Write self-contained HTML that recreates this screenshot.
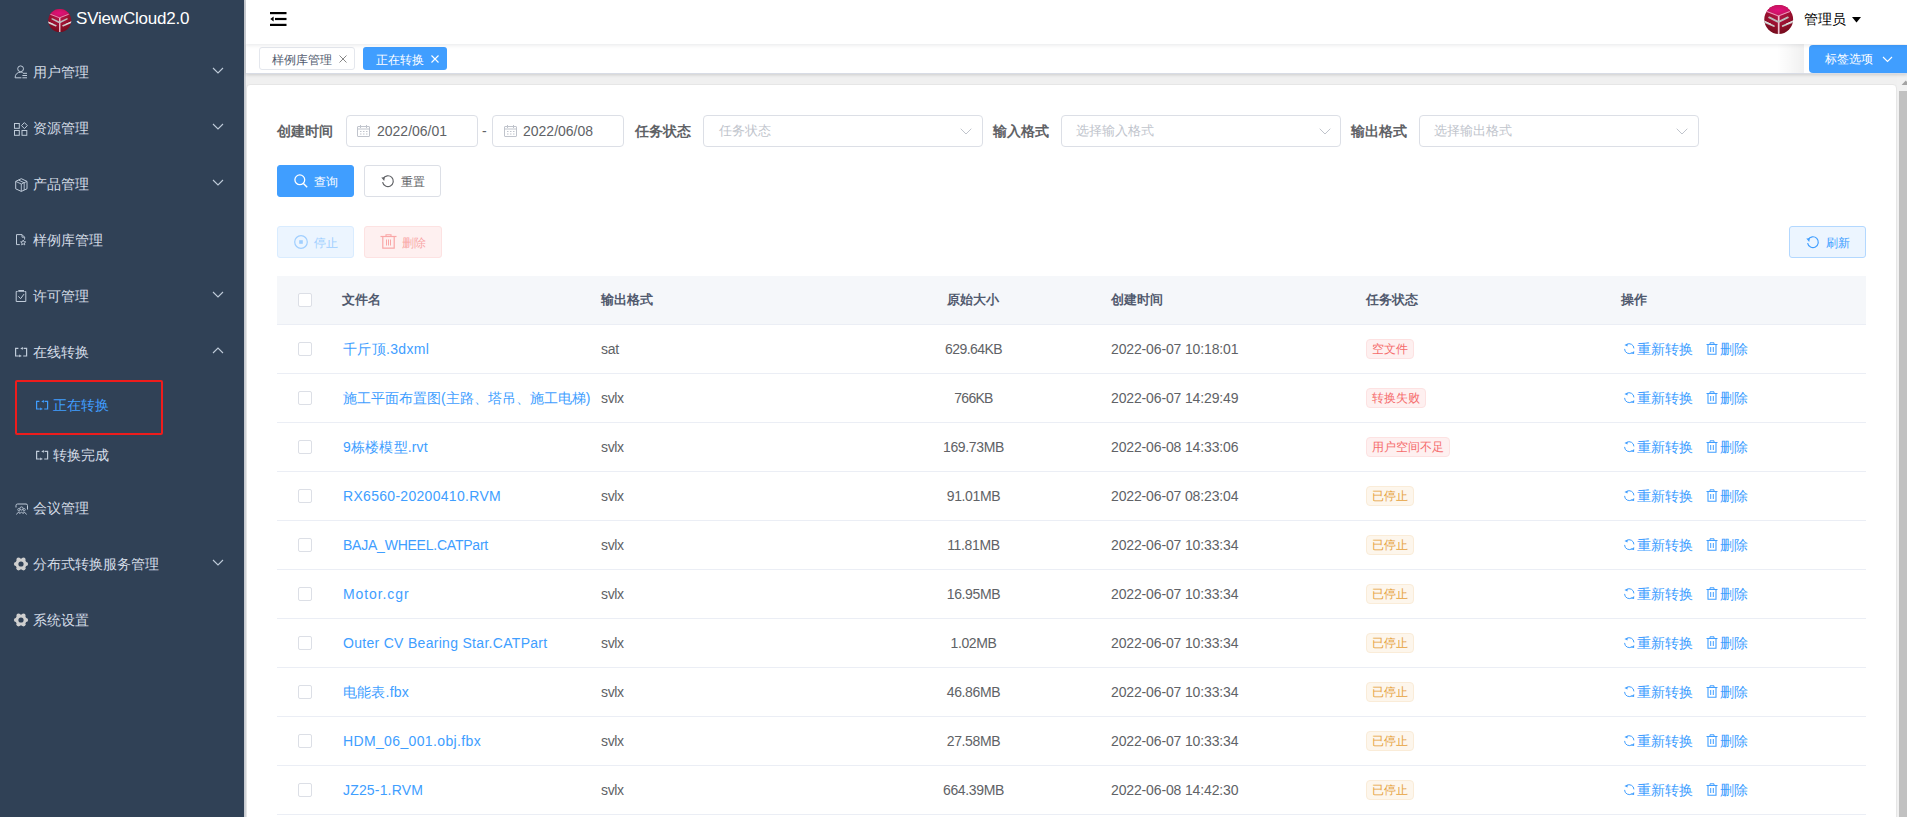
<!DOCTYPE html>
<html><head><meta charset="utf-8">
<style>
*{box-sizing:border-box}
html,body{margin:0;padding:0;width:1907px;height:817px;overflow:hidden;background:#fff;font-family:"Liberation Sans",sans-serif;font-size:14px;color:#606266}
.abs{position:absolute}
#side{position:absolute;left:0;top:0;width:244px;height:817px;background:#304156}
#sideshadow{position:absolute;left:244px;top:0;width:2px;height:817px;background:linear-gradient(to right,#c4c7cd,#d3d6da)}
.logo{position:absolute;left:0;top:0;width:244px;height:45px}
.logotext{position:absolute;left:76px;top:9px;font-size:17px;letter-spacing:-0.2px;color:#fff;white-space:nowrap}
.mi{position:absolute;left:0;width:244px;height:56px;color:#d4dce6;font-size:14px}
.mi .t{position:absolute;left:33px;top:-1px;line-height:56px;white-space:nowrap}
.mi svg.ic{position:absolute;left:14px;top:22px}
.mi .arr{position:absolute;left:212px;top:22px}
.smi{position:absolute;left:0;width:244px;height:50px;color:#d4dce6}
.smi .t{position:absolute;left:53px;top:-1px;line-height:50px;white-space:nowrap}
.smi svg.ic{position:absolute;left:35px;top:19px}
#nav{position:absolute;left:246px;top:0;width:1661px;height:44px;background:#fff;box-shadow:0 1px 4px rgba(0,21,41,.1);z-index:3}
#tags{position:absolute;left:246px;top:44px;width:1661px;height:30px;background:#fff;box-shadow:0 1px 3px 0 rgba(0,0,0,.15);border-bottom:1px solid #d8dce5;z-index:2}
#main{position:absolute;left:246px;top:74px;width:1661px;height:743px;background:#f0f0f0}
#card{position:absolute;left:0;top:10px;width:1651px;height:800px;background:#fff;border:1px solid #e6e6e6;border-radius:4px}
.lbl{position:absolute;font-weight:bold;color:#606266;line-height:32px;white-space:nowrap}
.inp{position:absolute;height:32px;border:1px solid #dcdfe6;border-radius:4px;background:#fff}
.inp .v{position:absolute;left:30px;top:0;line-height:30px;color:#606266;white-space:nowrap}
.inp .ph{position:absolute;left:15px;top:0;line-height:30px;color:#c0c4cc;font-size:13px;white-space:nowrap}
.btn{position:absolute;height:32px;border-radius:3px;font-size:12px;white-space:nowrap}
.th{position:absolute;top:276px;height:48px;line-height:48px;font-size:13px;font-weight:bold;color:#515a6e;white-space:nowrap}
.row{position:absolute;left:277px;width:1589px;height:49px;border-bottom:1px solid #ebeef5;background:#fff}
.cb{position:absolute;width:14px;height:14px;border:1px solid #dcdfe6;border-radius:2px;background:#fff}
.c{position:absolute;top:0;line-height:48px;white-space:nowrap}
.link{color:#409eff}
.tag{position:absolute;top:14px;height:20px;line-height:18px;font-size:12px;padding:0 5px;border-radius:4px;border:1px solid;white-space:nowrap}
.red{background:#fef0f0;border-color:#fde2e2;color:#f56c6c}
.org{background:#fdf6ec;border-color:#faecd8;color:#e6a23c}
</style></head>
<body>
<!-- SIDEBAR -->
<div id="side">
  <div class="logo">
    <svg class="abs" style="left:48px;top:9px" width="24" height="24" viewBox="0 0 30 30"><defs><radialGradient id="sg" cx="0.5" cy="0.3" r="0.75"><stop offset="0" stop-color="#b8144e"/><stop offset="0.55" stop-color="#98102e"/><stop offset="1" stop-color="#6e0a1a"/></radialGradient>
<radialGradient id="sgt" cx="0.5" cy="0.55" r="0.6"><stop offset="0" stop-color="#e0107a"/><stop offset="1" stop-color="#b81450"/></radialGradient>
<clipPath id="scl"><circle cx="14.7" cy="14.5" r="14.4"/></clipPath></defs>
<circle cx="14.7" cy="14.5" r="14.4" fill="url(#sg)"/>
<g clip-path="url(#scl)"><path d="M-2 5.5 L14.4 11 L31 5.5 L31 -2 L-2 -2 Z" fill="url(#sgt)"/>
<path d="M2.9 6.6 L14.4 11 L25.8 6.6" stroke="#eb9ab8" stroke-width="1.1" fill="none"/>
<path d="M14.7 11 V30" stroke="#efc4d2" stroke-width="1.7"/>
<path d="M5.2 12.4 L13.6 16.6 M15.2 16.6 L23.8 12.4" stroke="#bdbdbd" stroke-width="1.9" stroke-linecap="round"/>
<path d="M-1 16.2 L9.8 21 M18.8 21 L30 16.2" stroke="#c8c8c8" stroke-width="1.9" stroke-linecap="round"/>
<path d="M-1 15.6 L7 19.2 M22 19.2 L30 15.6" stroke="#f2f2f2" stroke-width="0.8"/></g></svg>
    <div class="logotext">SViewCloud2.0</div>
  </div>
  <div class="mi" style="top:45px"><svg class="ic" style="left:14px;top:20px" width="14" height="14" viewBox="0 0 14 14"><circle cx="6.6" cy="3.8" r="2.9" stroke="#bfcbd9" fill="none"/><path d="M1.1 12.8 C1.1 9.2 3.4 7.2 6.6 7.2 C7.4 7.2 8.1 7.4 8.7 7.7" stroke="#bfcbd9" fill="none"/><path d="M1.1 12.8 H7.4 M9 8.3 H13 M8.4 10.5 H13 M8.4 12.8 H13" stroke="#bfcbd9" fill="none"/></svg><span class="t">用户管理</span><svg class="arr" width="12" height="7" viewBox="0 0 12 7"><path d="M1 1 L6 6 L11 1" stroke="#bfcbd9" stroke-width="1.1" fill="none"/></svg></div>
  <div class="mi" style="top:101px"><svg class="ic" style="left:14px;top:21px" width="14" height="14" viewBox="0 0 14 14"><rect x="0.5" y="1.5" width="4.8" height="4.8" stroke="#bfcbd9" fill="none"/><rect x="0.5" y="8.5" width="4.8" height="4.8" stroke="#bfcbd9" fill="none"/><rect x="8" y="8.5" width="4.8" height="4.8" stroke="#bfcbd9" fill="none"/><path d="M10.4 0.6 L13.3 3.6 L10.4 6.6 L7.5 3.6 Z" stroke="#bfcbd9" fill="none"/></svg><span class="t">资源管理</span><svg class="arr" width="12" height="7" viewBox="0 0 12 7"><path d="M1 1 L6 6 L11 1" stroke="#bfcbd9" stroke-width="1.1" fill="none"/></svg></div>
  <div class="mi" style="top:157px"><svg class="ic" style="left:15px;top:21px" width="13" height="14" viewBox="0 0 13 14"><path d="M0.7 3.4 L6.3 0.7 L12 3.4 L12 10.8 L6.3 13.4 L0.7 10.8 Z" stroke="#bfcbd9" fill="none"/><path d="M0.7 3.4 L6.3 6 L12 3.4 M6.3 6 V13.4 M3.5 2 L9.2 4.8 V12" stroke="#bfcbd9" stroke-width="0.9" fill="none"/></svg><span class="t">产品管理</span><svg class="arr" width="12" height="7" viewBox="0 0 12 7"><path d="M1 1 L6 6 L11 1" stroke="#bfcbd9" stroke-width="1.1" fill="none"/></svg></div>
  <div class="mi" style="top:213px"><svg class="ic" style="left:15px;top:21px" width="12" height="13" viewBox="0 0 12 13"><path d="M7 0.6 H1.5 V10.6 H4.8" stroke="#bfcbd9" fill="none"/><path d="M7 0.6 L9.6 3.2 V5.6 M7 0.6 V3.2 H9.6" stroke="#bfcbd9" stroke-width="0.9" fill="none"/><path d="M8.20 6.00 L8.91 7.73 L10.77 7.87 L9.34 9.07 L9.79 10.88 L8.20 9.90 L6.61 10.88 L7.06 9.07 L5.63 7.87 L7.49 7.73 Z" stroke="#bfcbd9" stroke-width="0.9" stroke-linejoin="round" fill="none"/></svg><span class="t">样例库管理</span></div>
  <div class="mi" style="top:269px"><svg class="ic" style="left:15px;top:21px" width="12" height="13" viewBox="0 0 12 13"><path d="M2.6 1.5 H1.2 V11.5 H10.8 V1.5 H9.4" stroke="#bfcbd9" fill="none"/><rect x="3.3" y="0" width="5.7" height="1.8" fill="#bfcbd9"/><path d="M3.3 6.3 L5.6 8.7 L9 4.1" stroke="#bfcbd9" fill="none"/></svg><span class="t">许可管理</span><svg class="arr" width="12" height="7" viewBox="0 0 12 7"><path d="M1 1 L6 6 L11 1" stroke="#bfcbd9" stroke-width="1.1" fill="none"/></svg></div>
  <div class="mi" style="top:325px"><svg class="ic" style="left:14px;top:22px" width="14" height="12" viewBox="0 0 14 12"><path d="M4.4 1.4 H1.6 V9.0 H4.9 M9.6 1.4 H12.6 V9.0 H9.2" stroke="#bfcbd9" stroke-width="1.2" fill="none"/><path d="M6.2 1.4 L8.9 0 L8.9 2.8 Z M7.9 8.9 L5.1 7.5 L5.1 10.3 Z" fill="#bfcbd9"/></svg><span class="t">在线转换</span><svg class="arr" width="12" height="7" viewBox="0 0 12 7"><path d="M1 6 L6 1 L11 6" stroke="#bfcbd9" stroke-width="1.1" fill="none"/></svg></div>
  <div class="mi" style="top:481px"><svg class="ic" style="left:14px;top:22px" width="15" height="13" viewBox="0 0 15 13"><path d="M2 4.5 V2.5 Q2 1 3.5 1 H12 Q13.5 1 13.5 2.5 V6.5" stroke="#bfcbd9" fill="none"/><circle cx="7.5" cy="5.5" r="1.6" stroke="#bfcbd9" stroke-width="0.9" fill="none"/><circle cx="4.8" cy="6.6" r="1.1" stroke="#bfcbd9" stroke-width="0.8" fill="none"/><circle cx="10.2" cy="6.6" r="1.1" stroke="#bfcbd9" stroke-width="0.8" fill="none"/><path d="M2.5 11.5 Q3.8 8.5 6 9 M5.5 11 Q7.5 7.5 9.5 11 M9 9 Q11 8.5 12.5 11.5" stroke="#bfcbd9" stroke-width="0.9" fill="none"/></svg><span class="t">会议管理</span></div>
  <div class="mi" style="top:537px"><svg class="ic" style="left:13px;top:19px" width="16" height="16" viewBox="0 0 16 16"><g fill="#cfcfcf"><circle cx="8" cy="8" r="5.6"/><circle cx="13.00" cy="8.00" r="2.1"/><circle cx="10.50" cy="12.33" r="2.1"/><circle cx="5.50" cy="12.33" r="2.1"/><circle cx="3.00" cy="8.00" r="2.1"/><circle cx="5.50" cy="3.67" r="2.1"/><circle cx="10.50" cy="3.67" r="2.1"/></g><circle cx="8" cy="8" r="2.6" fill="#304156"/></svg><span class="t">分布式转换服务管理</span><svg class="arr" width="12" height="7" viewBox="0 0 12 7"><path d="M1 1 L6 6 L11 1" stroke="#bfcbd9" stroke-width="1.1" fill="none"/></svg></div>
  <div class="mi" style="top:593px"><svg class="ic" style="left:13px;top:19px" width="16" height="16" viewBox="0 0 16 16"><g fill="#cfcfcf"><circle cx="8" cy="8" r="5.6"/><circle cx="13.00" cy="8.00" r="2.1"/><circle cx="10.50" cy="12.33" r="2.1"/><circle cx="5.50" cy="12.33" r="2.1"/><circle cx="3.00" cy="8.00" r="2.1"/><circle cx="5.50" cy="3.67" r="2.1"/><circle cx="10.50" cy="3.67" r="2.1"/></g><circle cx="8" cy="8" r="2.6" fill="#304156"/></svg><span class="t">系统设置</span></div>
  <div class="smi" style="top:381px;color:#409eff"><svg class="ic" width="14" height="12" viewBox="0 0 14 12"><path d="M4.4 1.4 H1.6 V9.0 H4.9 M9.6 1.4 H12.6 V9.0 H9.2" stroke="#409eff" stroke-width="1.2" fill="none"/><path d="M6.2 1.4 L8.9 0 L8.9 2.8 Z M7.9 8.9 L5.1 7.5 L5.1 10.3 Z" fill="#409eff"/></svg><span class="t">正在转换</span></div>
  <div class="smi" style="top:431px"><svg class="ic" width="14" height="12" viewBox="0 0 14 12"><path d="M4.4 1.4 H1.6 V9.0 H4.9 M9.6 1.4 H12.6 V9.0 H9.2" stroke="#bfcbd9" stroke-width="1.2" fill="none"/><path d="M6.2 1.4 L8.9 0 L8.9 2.8 Z M7.9 8.9 L5.1 7.5 L5.1 10.3 Z" fill="#bfcbd9"/></svg><span class="t">转换完成</span></div>
  <div class="abs" style="left:15px;top:380px;width:148px;height:55px;border:2px solid #ee1c1c;border-radius:2px"></div>
</div>
<div id="sideshadow"></div>
<!-- NAVBAR -->
<div id="nav">
  <svg class="abs" style="left:24px;top:12px" width="17" height="14" viewBox="0 0 17 14"><rect x="0" y="0" width="16.5" height="2.2" fill="#000"/><rect x="5" y="5.9" width="11.5" height="2.2" fill="#000"/><rect x="0" y="11.8" width="16.5" height="2.2" fill="#000"/><path d="M0.3 7 L3.6 4.6 V9.4 Z" fill="#000"/></svg>
  <svg class="abs" style="left:1518px;top:4.7px" width="30" height="30" viewBox="0 0 30 30"><defs><radialGradient id="ag" cx="0.5" cy="0.3" r="0.75"><stop offset="0" stop-color="#b8144e"/><stop offset="0.55" stop-color="#98102e"/><stop offset="1" stop-color="#6e0a1a"/></radialGradient>
<radialGradient id="agt" cx="0.5" cy="0.55" r="0.6"><stop offset="0" stop-color="#e0107a"/><stop offset="1" stop-color="#b81450"/></radialGradient>
<clipPath id="acl"><circle cx="14.7" cy="14.5" r="14.4"/></clipPath></defs>
<circle cx="14.7" cy="14.5" r="14.4" fill="url(#ag)"/>
<g clip-path="url(#acl)"><path d="M-2 5.5 L14.4 11 L31 5.5 L31 -2 L-2 -2 Z" fill="url(#agt)"/>
<path d="M2.9 6.6 L14.4 11 L25.8 6.6" stroke="#eb9ab8" stroke-width="1.1" fill="none"/>
<path d="M14.7 11 V30" stroke="#efc4d2" stroke-width="1.7"/>
<path d="M5.2 12.4 L13.6 16.6 M15.2 16.6 L23.8 12.4" stroke="#bdbdbd" stroke-width="1.9" stroke-linecap="round"/>
<path d="M-1 16.2 L9.8 21 M18.8 21 L30 16.2" stroke="#c8c8c8" stroke-width="1.9" stroke-linecap="round"/>
<path d="M-1 15.6 L7 19.2 M22 19.2 L30 15.6" stroke="#f2f2f2" stroke-width="0.8"/></g></svg>
  <div class="abs" style="left:1558px;top:0;line-height:38px;color:#000;font-size:14px;white-space:nowrap">管理员</div>
  <svg class="abs" style="left:1606px;top:17px" width="9" height="6" viewBox="0 0 9 6"><path d="M0 0 H9 L4.5 5.5 Z" fill="#000"/></svg>
</div>
<div id="tags">
  <div class="abs" style="left:13px;top:3px;width:96px;height:23px;border:1px solid #e4e7ed;border-radius:3px;background:#fff"></div>
  <div class="abs" style="left:26px;top:5px;line-height:23px;font-size:12px;color:#515a6e;white-space:nowrap">样例库管理</div>
  <svg class="abs" style="left:93px;top:11px" width="8" height="8" viewBox="0 0 8 8"><path d="M0.5 0.5 L7.5 7.5 M7.5 0.5 L0.5 7.5" stroke="#888" stroke-width="1"/></svg>
  <div class="abs" style="left:117px;top:3px;width:84px;height:23px;border-radius:3px;background:#409eff"></div>
  <div class="abs" style="left:130px;top:5px;line-height:23px;font-size:12px;color:#fff;white-space:nowrap">正在转换</div>
  <svg class="abs" style="left:185px;top:11px" width="8" height="8" viewBox="0 0 8 8"><path d="M0.5 0.5 L7.5 7.5 M7.5 0.5 L0.5 7.5" stroke="#fff" stroke-width="1.1"/></svg>
  <div class="abs" style="left:1531px;top:0;width:27px;height:29px;background:linear-gradient(to right,rgba(255,255,255,0),rgba(0,0,0,.06))"></div>
  <div class="abs" style="left:1563px;top:1px;width:98px;height:28px;border-radius:4px 0 0 4px;background:#409eff"></div>
  <div class="abs" style="left:1579px;top:1px;line-height:28px;font-size:12px;color:#fff;white-space:nowrap">标签选项</div>
  <svg class="abs" style="left:1636px;top:12px" width="11" height="7" viewBox="0 0 11 7"><path d="M1 1 L5.5 5.5 L10 1" stroke="#fff" stroke-width="1.1" fill="none"/></svg>
</div>
<div id="main"><div id="card"></div></div>

<!-- FILTERS -->
<div class="lbl" style="left:277px;top:115px">创建时间</div>
<div class="inp" style="left:346px;top:115px;width:132px"></div>
<svg class="abs" style="left:357px;top:125px" width="13" height="12" viewBox="0 0 13 12"><rect x="0.5" y="1.5" width="12" height="10" rx="0.5" stroke="#c0c4cc" fill="none"/><path d="M0.5 4 H12.5" stroke="#c0c4cc"/><path d="M3.5 0 V3 M9.5 0 V3" stroke="#c0c4cc"/><path d="M3 6.5 H4.5 M6 6.5 H7.5 M9 6.5 H10.5 M3 9 H4.5 M6 9 H7.5 M9 9 H10.5" stroke="#c0c4cc" stroke-width="1"/></svg>
<div class="abs" style="left:377px;top:115px;line-height:32px;color:#606266;white-space:nowrap">2022/06/01</div>
<div class="abs" style="left:482px;top:115px;line-height:32px;color:#606266">-</div>
<div class="inp" style="left:492px;top:115px;width:132px"></div>
<svg class="abs" style="left:504px;top:125px" width="13" height="12" viewBox="0 0 13 12"><rect x="0.5" y="1.5" width="12" height="10" rx="0.5" stroke="#c0c4cc" fill="none"/><path d="M0.5 4 H12.5" stroke="#c0c4cc"/><path d="M3.5 0 V3 M9.5 0 V3" stroke="#c0c4cc"/><path d="M3 6.5 H4.5 M6 6.5 H7.5 M9 6.5 H10.5 M3 9 H4.5 M6 9 H7.5 M9 9 H10.5" stroke="#c0c4cc" stroke-width="1"/></svg>
<div class="abs" style="left:523px;top:115px;line-height:32px;color:#606266;white-space:nowrap">2022/06/08</div>
<div class="lbl" style="left:635px;top:115px">任务状态</div>
<div class="inp" style="left:703px;top:115px;width:280px"></div>
<div class="abs" style="left:719px;top:115px;line-height:32px;color:#c0c4cc;font-size:13px;white-space:nowrap">任务状态</div>
<svg class="abs" style="left:960px;top:128px" width="12" height="7" viewBox="0 0 12 7"><path d="M0.7 0.7 L6 6 L11.3 0.7" stroke="#c0c4cc" stroke-width="1" fill="none"/></svg>
<div class="lbl" style="left:993px;top:115px">输入格式</div>
<div class="inp" style="left:1061px;top:115px;width:280px"></div>
<div class="abs" style="left:1076px;top:115px;line-height:32px;color:#c0c4cc;font-size:13px;white-space:nowrap">选择输入格式</div>
<svg class="abs" style="left:1319px;top:128px" width="12" height="7" viewBox="0 0 12 7"><path d="M0.7 0.7 L6 6 L11.3 0.7" stroke="#c0c4cc" stroke-width="1" fill="none"/></svg>
<div class="lbl" style="left:1351px;top:115px">输出格式</div>
<div class="inp" style="left:1419px;top:115px;width:280px"></div>
<div class="abs" style="left:1434px;top:115px;line-height:32px;color:#c0c4cc;font-size:13px;white-space:nowrap">选择输出格式</div>
<svg class="abs" style="left:1676px;top:128px" width="12" height="7" viewBox="0 0 12 7"><path d="M0.7 0.7 L6 6 L11.3 0.7" stroke="#c0c4cc" stroke-width="1" fill="none"/></svg>
<!-- BUTTONS -->
<div class="btn" style="left:277px;top:165px;width:77px;background:#409eff;border:1px solid #409eff"></div>
<svg class="abs" style="left:294px;top:174px" width="14" height="14" viewBox="0 0 14 14"><circle cx="5.8" cy="5.8" r="4.9" stroke="#fff" stroke-width="1.3" fill="none"/><path d="M9.4 9.4 L13.2 13.2" stroke="#fff" stroke-width="1.4"/></svg>
<div class="abs" style="left:314px;top:166px;line-height:33px;font-size:12px;color:#fff;white-space:nowrap">查询</div>
<div class="btn" style="left:364px;top:165px;width:77px;background:#fff;border:1px solid #dcdfe6"></div>
<svg class="abs" style="left:381px;top:174px" width="14" height="14" viewBox="0 0 14 14"><path d="M2.2 4.5 A5.4 5.4 0 1 1 1.6 8.2" stroke="#606266" stroke-width="1.2" fill="none"/><path d="M0.3 3.6 L3.9 3.2 L3.2 6.9 Z" fill="#606266"/></svg>
<div class="abs" style="left:401px;top:166px;line-height:33px;font-size:12px;color:#606266;white-space:nowrap">重置</div>

<div class="btn" style="left:277px;top:226px;width:77px;background:#ecf5ff;border:1px solid #d9ecff"></div>
<svg class="abs" style="left:294px;top:235px" width="14" height="14" viewBox="0 0 14 14"><circle cx="7" cy="7" r="6.3" stroke="#a0cfff" stroke-width="1.2" fill="none"/><rect x="5.2" y="5.2" width="3.6" height="3.6" fill="#a0cfff"/></svg>
<div class="abs" style="left:314px;top:227px;line-height:33px;font-size:12px;color:#a0cfff;white-space:nowrap">停止</div>
<div class="btn" style="left:364px;top:226px;width:78px;background:#fef0f0;border:1px solid #fde2e2"></div>
<svg class="abs" style="left:380px;top:234px" width="17" height="15" viewBox="0 0 17 15"><path d="M0.5 2.5 H16.5" stroke="#f9a7a7" stroke-width="1.2"/><path d="M6 2.5 V0.8 H11 V2.5" stroke="#f9a7a7" stroke-width="1.1" fill="none"/><path d="M2.8 2.5 V14.2 H14.2 V2.5" stroke="#f9a7a7" stroke-width="1.2" fill="none"/><path d="M6.5 5.5 V11.5 M8.5 5.5 V11.5 M10.5 5.5 V11.5" stroke="#f9a7a7" stroke-width="1"/></svg>
<div class="abs" style="left:402px;top:227px;line-height:33px;font-size:12px;color:#f9a7a7;white-space:nowrap">删除</div>

<div class="btn" style="left:1789px;top:226px;width:77px;background:#ecf5ff;border:1px solid #b3d8ff"></div>
<svg class="abs" style="left:1806px;top:235px" width="14" height="14" viewBox="0 0 14 14"><path d="M2.2 4.5 A5.4 5.4 0 1 1 1.6 8.2" stroke="#409eff" stroke-width="1.2" fill="none"/><path d="M0.3 3.6 L3.9 3.2 L3.2 6.9 Z" fill="#409eff"/></svg>
<div class="abs" style="left:1826px;top:227px;line-height:33px;font-size:12px;color:#409eff;white-space:nowrap">刷新</div>
<!-- TABLE -->
<div class="abs" style="left:277px;top:276px;width:1589px;height:49px;background:#f5f7fa;border-bottom:1px solid #ebeef5"></div>
<div class="cb" style="left:298px;top:293px"></div>
<div class="th" style="left:342px">文件名</div>
<div class="th" style="left:601px">输出格式</div>
<div class="th" style="left:947px">原始大小</div>
<div class="th" style="left:1111px">创建时间</div>
<div class="th" style="left:1366px">任务状态</div>
<div class="th" style="left:1621px">操作</div>
<div class="row" style="top:325px"><div class="cb" style="left:21px;top:17px"></div><div class="c link" style="left:66px;letter-spacing:0.33px">千斤顶.3dxml</div><div class="c" style="left:324px;letter-spacing:-0.27px">sat</div><div class="c" style="left:569px;width:255px;text-align:center;letter-spacing:-0.59px;text-indent:0px">629.64KB</div><div class="c" style="left:834px;letter-spacing:-0.14px">2022-06-07 10:18:01</div><div class="tag red" style="left:1089px">空文件</div><svg class="abs" style="left:1347px;top:18px" width="12" height="12" viewBox="0 0 12 12"><path d="M2.6 1.5 A4.7 4.7 0 0 1 9.9 5.4 M0.6 5.9 A4.7 4.7 0 0 0 8.2 9.6" stroke="#409eff" stroke-width="1" fill="none"/><path d="M0.4 2.1 L3.6 0.5 L3.5 3.6 Z M10.2 7.9 L10.1 10.9 L6.9 10.6 Z" fill="#409eff"/></svg><div class="c link" style="left:1360px">重新转换</div><svg class="abs" style="left:1429px;top:17px" width="12" height="13" viewBox="0 0 12 13"><path d="M0.5 2.5 H11.5" stroke="#409eff" stroke-width="1"/><path d="M4 2.5 V0.8 H8 V2.5" stroke="#409eff" stroke-width="1" fill="none"/><path d="M2 2.5 V12.3 H10 V2.5" stroke="#409eff" stroke-width="1.1" fill="none"/><path d="M4.7 5 V10 M7.3 5 V10" stroke="#409eff" stroke-width="1"/></svg><div class="c link" style="left:1443px">删除</div></div>
<div class="row" style="top:374px"><div class="cb" style="left:21px;top:17px"></div><div class="c link" style="left:66px">施工平面布置图(主路、塔吊、施工电梯)</div><div class="c" style="left:324px;letter-spacing:-0.37px">svlx</div><div class="c" style="left:569px;width:255px;text-align:center;letter-spacing:-0.74px;text-indent:0px">766KB</div><div class="c" style="left:834px;letter-spacing:-0.14px">2022-06-07 14:29:49</div><div class="tag red" style="left:1089px">转换失败</div><svg class="abs" style="left:1347px;top:18px" width="12" height="12" viewBox="0 0 12 12"><path d="M2.6 1.5 A4.7 4.7 0 0 1 9.9 5.4 M0.6 5.9 A4.7 4.7 0 0 0 8.2 9.6" stroke="#409eff" stroke-width="1" fill="none"/><path d="M0.4 2.1 L3.6 0.5 L3.5 3.6 Z M10.2 7.9 L10.1 10.9 L6.9 10.6 Z" fill="#409eff"/></svg><div class="c link" style="left:1360px">重新转换</div><svg class="abs" style="left:1429px;top:17px" width="12" height="13" viewBox="0 0 12 13"><path d="M0.5 2.5 H11.5" stroke="#409eff" stroke-width="1"/><path d="M4 2.5 V0.8 H8 V2.5" stroke="#409eff" stroke-width="1" fill="none"/><path d="M2 2.5 V12.3 H10 V2.5" stroke="#409eff" stroke-width="1.1" fill="none"/><path d="M4.7 5 V10 M7.3 5 V10" stroke="#409eff" stroke-width="1"/></svg><div class="c link" style="left:1443px">删除</div></div>
<div class="row" style="top:423px"><div class="cb" style="left:21px;top:17px"></div><div class="c link" style="left:66px;letter-spacing:0.18px">9栋楼模型.rvt</div><div class="c" style="left:324px;letter-spacing:-0.37px">svlx</div><div class="c" style="left:569px;width:255px;text-align:center;letter-spacing:-0.35px;text-indent:0px">169.73MB</div><div class="c" style="left:834px;letter-spacing:-0.14px">2022-06-08 14:33:06</div><div class="tag red" style="left:1089px">用户空间不足</div><svg class="abs" style="left:1347px;top:18px" width="12" height="12" viewBox="0 0 12 12"><path d="M2.6 1.5 A4.7 4.7 0 0 1 9.9 5.4 M0.6 5.9 A4.7 4.7 0 0 0 8.2 9.6" stroke="#409eff" stroke-width="1" fill="none"/><path d="M0.4 2.1 L3.6 0.5 L3.5 3.6 Z M10.2 7.9 L10.1 10.9 L6.9 10.6 Z" fill="#409eff"/></svg><div class="c link" style="left:1360px">重新转换</div><svg class="abs" style="left:1429px;top:17px" width="12" height="13" viewBox="0 0 12 13"><path d="M0.5 2.5 H11.5" stroke="#409eff" stroke-width="1"/><path d="M4 2.5 V0.8 H8 V2.5" stroke="#409eff" stroke-width="1" fill="none"/><path d="M2 2.5 V12.3 H10 V2.5" stroke="#409eff" stroke-width="1.1" fill="none"/><path d="M4.7 5 V10 M7.3 5 V10" stroke="#409eff" stroke-width="1"/></svg><div class="c link" style="left:1443px">删除</div></div>
<div class="row" style="top:472px"><div class="cb" style="left:21px;top:17px"></div><div class="c link" style="left:66px;letter-spacing:0.3px">RX6560-20200410.RVM</div><div class="c" style="left:324px;letter-spacing:-0.37px">svlx</div><div class="c" style="left:569px;width:255px;text-align:center;letter-spacing:-0.35px;text-indent:0px">91.01MB</div><div class="c" style="left:834px;letter-spacing:-0.14px">2022-06-07 08:23:04</div><div class="tag org" style="left:1089px">已停止</div><svg class="abs" style="left:1347px;top:18px" width="12" height="12" viewBox="0 0 12 12"><path d="M2.6 1.5 A4.7 4.7 0 0 1 9.9 5.4 M0.6 5.9 A4.7 4.7 0 0 0 8.2 9.6" stroke="#409eff" stroke-width="1" fill="none"/><path d="M0.4 2.1 L3.6 0.5 L3.5 3.6 Z M10.2 7.9 L10.1 10.9 L6.9 10.6 Z" fill="#409eff"/></svg><div class="c link" style="left:1360px">重新转换</div><svg class="abs" style="left:1429px;top:17px" width="12" height="13" viewBox="0 0 12 13"><path d="M0.5 2.5 H11.5" stroke="#409eff" stroke-width="1"/><path d="M4 2.5 V0.8 H8 V2.5" stroke="#409eff" stroke-width="1" fill="none"/><path d="M2 2.5 V12.3 H10 V2.5" stroke="#409eff" stroke-width="1.1" fill="none"/><path d="M4.7 5 V10 M7.3 5 V10" stroke="#409eff" stroke-width="1"/></svg><div class="c link" style="left:1443px">删除</div></div>
<div class="row" style="top:521px"><div class="cb" style="left:21px;top:17px"></div><div class="c link" style="left:66px;letter-spacing:-0.23px">BAJA_WHEEL.CATPart</div><div class="c" style="left:324px;letter-spacing:-0.37px">svlx</div><div class="c" style="left:569px;width:255px;text-align:center;letter-spacing:-0.35px;text-indent:0px">11.81MB</div><div class="c" style="left:834px;letter-spacing:-0.14px">2022-06-07 10:33:34</div><div class="tag org" style="left:1089px">已停止</div><svg class="abs" style="left:1347px;top:18px" width="12" height="12" viewBox="0 0 12 12"><path d="M2.6 1.5 A4.7 4.7 0 0 1 9.9 5.4 M0.6 5.9 A4.7 4.7 0 0 0 8.2 9.6" stroke="#409eff" stroke-width="1" fill="none"/><path d="M0.4 2.1 L3.6 0.5 L3.5 3.6 Z M10.2 7.9 L10.1 10.9 L6.9 10.6 Z" fill="#409eff"/></svg><div class="c link" style="left:1360px">重新转换</div><svg class="abs" style="left:1429px;top:17px" width="12" height="13" viewBox="0 0 12 13"><path d="M0.5 2.5 H11.5" stroke="#409eff" stroke-width="1"/><path d="M4 2.5 V0.8 H8 V2.5" stroke="#409eff" stroke-width="1" fill="none"/><path d="M2 2.5 V12.3 H10 V2.5" stroke="#409eff" stroke-width="1.1" fill="none"/><path d="M4.7 5 V10 M7.3 5 V10" stroke="#409eff" stroke-width="1"/></svg><div class="c link" style="left:1443px">删除</div></div>
<div class="row" style="top:570px"><div class="cb" style="left:21px;top:17px"></div><div class="c link" style="left:66px;letter-spacing:0.9px">Motor.cgr</div><div class="c" style="left:324px;letter-spacing:-0.37px">svlx</div><div class="c" style="left:569px;width:255px;text-align:center;letter-spacing:-0.35px;text-indent:0px">16.95MB</div><div class="c" style="left:834px;letter-spacing:-0.14px">2022-06-07 10:33:34</div><div class="tag org" style="left:1089px">已停止</div><svg class="abs" style="left:1347px;top:18px" width="12" height="12" viewBox="0 0 12 12"><path d="M2.6 1.5 A4.7 4.7 0 0 1 9.9 5.4 M0.6 5.9 A4.7 4.7 0 0 0 8.2 9.6" stroke="#409eff" stroke-width="1" fill="none"/><path d="M0.4 2.1 L3.6 0.5 L3.5 3.6 Z M10.2 7.9 L10.1 10.9 L6.9 10.6 Z" fill="#409eff"/></svg><div class="c link" style="left:1360px">重新转换</div><svg class="abs" style="left:1429px;top:17px" width="12" height="13" viewBox="0 0 12 13"><path d="M0.5 2.5 H11.5" stroke="#409eff" stroke-width="1"/><path d="M4 2.5 V0.8 H8 V2.5" stroke="#409eff" stroke-width="1" fill="none"/><path d="M2 2.5 V12.3 H10 V2.5" stroke="#409eff" stroke-width="1.1" fill="none"/><path d="M4.7 5 V10 M7.3 5 V10" stroke="#409eff" stroke-width="1"/></svg><div class="c link" style="left:1443px">删除</div></div>
<div class="row" style="top:619px"><div class="cb" style="left:21px;top:17px"></div><div class="c link" style="left:66px;letter-spacing:0.3px">Outer CV Bearing Star.CATPart</div><div class="c" style="left:324px;letter-spacing:-0.37px">svlx</div><div class="c" style="left:569px;width:255px;text-align:center;letter-spacing:-0.4px;text-indent:0px">1.02MB</div><div class="c" style="left:834px;letter-spacing:-0.14px">2022-06-07 10:33:34</div><div class="tag org" style="left:1089px">已停止</div><svg class="abs" style="left:1347px;top:18px" width="12" height="12" viewBox="0 0 12 12"><path d="M2.6 1.5 A4.7 4.7 0 0 1 9.9 5.4 M0.6 5.9 A4.7 4.7 0 0 0 8.2 9.6" stroke="#409eff" stroke-width="1" fill="none"/><path d="M0.4 2.1 L3.6 0.5 L3.5 3.6 Z M10.2 7.9 L10.1 10.9 L6.9 10.6 Z" fill="#409eff"/></svg><div class="c link" style="left:1360px">重新转换</div><svg class="abs" style="left:1429px;top:17px" width="12" height="13" viewBox="0 0 12 13"><path d="M0.5 2.5 H11.5" stroke="#409eff" stroke-width="1"/><path d="M4 2.5 V0.8 H8 V2.5" stroke="#409eff" stroke-width="1" fill="none"/><path d="M2 2.5 V12.3 H10 V2.5" stroke="#409eff" stroke-width="1.1" fill="none"/><path d="M4.7 5 V10 M7.3 5 V10" stroke="#409eff" stroke-width="1"/></svg><div class="c link" style="left:1443px">删除</div></div>
<div class="row" style="top:668px"><div class="cb" style="left:21px;top:17px"></div><div class="c link" style="left:66px;letter-spacing:0.2px">电能表.fbx</div><div class="c" style="left:324px;letter-spacing:-0.37px">svlx</div><div class="c" style="left:569px;width:255px;text-align:center;letter-spacing:-0.35px;text-indent:0px">46.86MB</div><div class="c" style="left:834px;letter-spacing:-0.14px">2022-06-07 10:33:34</div><div class="tag org" style="left:1089px">已停止</div><svg class="abs" style="left:1347px;top:18px" width="12" height="12" viewBox="0 0 12 12"><path d="M2.6 1.5 A4.7 4.7 0 0 1 9.9 5.4 M0.6 5.9 A4.7 4.7 0 0 0 8.2 9.6" stroke="#409eff" stroke-width="1" fill="none"/><path d="M0.4 2.1 L3.6 0.5 L3.5 3.6 Z M10.2 7.9 L10.1 10.9 L6.9 10.6 Z" fill="#409eff"/></svg><div class="c link" style="left:1360px">重新转换</div><svg class="abs" style="left:1429px;top:17px" width="12" height="13" viewBox="0 0 12 13"><path d="M0.5 2.5 H11.5" stroke="#409eff" stroke-width="1"/><path d="M4 2.5 V0.8 H8 V2.5" stroke="#409eff" stroke-width="1" fill="none"/><path d="M2 2.5 V12.3 H10 V2.5" stroke="#409eff" stroke-width="1.1" fill="none"/><path d="M4.7 5 V10 M7.3 5 V10" stroke="#409eff" stroke-width="1"/></svg><div class="c link" style="left:1443px">删除</div></div>
<div class="row" style="top:717px"><div class="cb" style="left:21px;top:17px"></div><div class="c link" style="left:66px;letter-spacing:0.36px">HDM_06_001.obj.fbx</div><div class="c" style="left:324px;letter-spacing:-0.37px">svlx</div><div class="c" style="left:569px;width:255px;text-align:center;letter-spacing:-0.35px;text-indent:0px">27.58MB</div><div class="c" style="left:834px;letter-spacing:-0.14px">2022-06-07 10:33:34</div><div class="tag org" style="left:1089px">已停止</div><svg class="abs" style="left:1347px;top:18px" width="12" height="12" viewBox="0 0 12 12"><path d="M2.6 1.5 A4.7 4.7 0 0 1 9.9 5.4 M0.6 5.9 A4.7 4.7 0 0 0 8.2 9.6" stroke="#409eff" stroke-width="1" fill="none"/><path d="M0.4 2.1 L3.6 0.5 L3.5 3.6 Z M10.2 7.9 L10.1 10.9 L6.9 10.6 Z" fill="#409eff"/></svg><div class="c link" style="left:1360px">重新转换</div><svg class="abs" style="left:1429px;top:17px" width="12" height="13" viewBox="0 0 12 13"><path d="M0.5 2.5 H11.5" stroke="#409eff" stroke-width="1"/><path d="M4 2.5 V0.8 H8 V2.5" stroke="#409eff" stroke-width="1" fill="none"/><path d="M2 2.5 V12.3 H10 V2.5" stroke="#409eff" stroke-width="1.1" fill="none"/><path d="M4.7 5 V10 M7.3 5 V10" stroke="#409eff" stroke-width="1"/></svg><div class="c link" style="left:1443px">删除</div></div>
<div class="row" style="top:766px"><div class="cb" style="left:21px;top:17px"></div><div class="c link" style="left:66px;letter-spacing:0.17px">JZ25-1.RVM</div><div class="c" style="left:324px;letter-spacing:-0.37px">svlx</div><div class="c" style="left:569px;width:255px;text-align:center;letter-spacing:-0.35px;text-indent:0px">664.39MB</div><div class="c" style="left:834px;letter-spacing:-0.14px">2022-06-08 14:42:30</div><div class="tag org" style="left:1089px">已停止</div><svg class="abs" style="left:1347px;top:18px" width="12" height="12" viewBox="0 0 12 12"><path d="M2.6 1.5 A4.7 4.7 0 0 1 9.9 5.4 M0.6 5.9 A4.7 4.7 0 0 0 8.2 9.6" stroke="#409eff" stroke-width="1" fill="none"/><path d="M0.4 2.1 L3.6 0.5 L3.5 3.6 Z M10.2 7.9 L10.1 10.9 L6.9 10.6 Z" fill="#409eff"/></svg><div class="c link" style="left:1360px">重新转换</div><svg class="abs" style="left:1429px;top:17px" width="12" height="13" viewBox="0 0 12 13"><path d="M0.5 2.5 H11.5" stroke="#409eff" stroke-width="1"/><path d="M4 2.5 V0.8 H8 V2.5" stroke="#409eff" stroke-width="1" fill="none"/><path d="M2 2.5 V12.3 H10 V2.5" stroke="#409eff" stroke-width="1.1" fill="none"/><path d="M4.7 5 V10 M7.3 5 V10" stroke="#409eff" stroke-width="1"/></svg><div class="c link" style="left:1443px">删除</div></div>
<!-- SCROLLBAR -->
<div class="abs" style="left:1897px;top:74px;width:10px;height:743px;background:#f1f1f1"></div>
<svg class="abs" style="left:1897px;top:74px" width="10" height="17" viewBox="0 0 10 17"><path d="M8.8 6.6 L13 10.9 H4.6 Z" fill="#a3a3a3"/></svg>
<div class="abs" style="left:1899px;top:91px;width:8px;height:726px;background:#c1c1c1"></div>
</body></html>
